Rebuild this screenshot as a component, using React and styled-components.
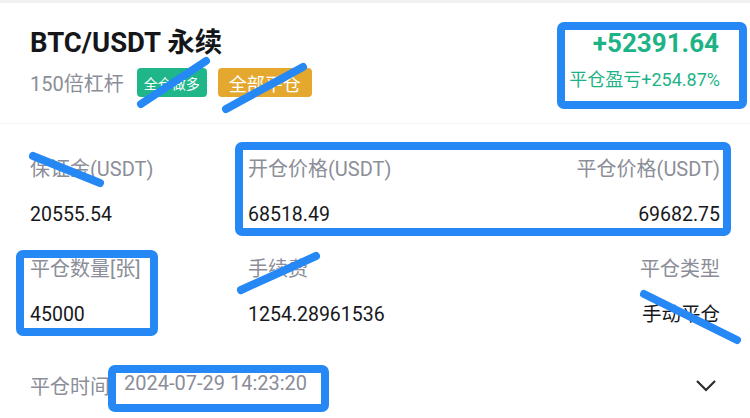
import React from 'react'
import styled, { createGlobalStyle } from 'styled-components'

const GlobalStyle = createGlobalStyle`
  html, body {
    margin: 0;
    padding: 0;
    background: #ffffff;
  }
  body {
    font-family: Roboto, "Noto Sans CJK SC", sans-serif;
  }
`

const Page = styled.div`
  position: relative;
  width: 750px;
  height: 418px;
  overflow: hidden;
  background: #fff;
  border-top: 3px solid #f1f1f3;
  box-sizing: border-box;
`

const Header = styled.div`
  display: flex;
  justify-content: space-between;
  padding: 24px 30px 0 30px;
  height: 96px;
  border-bottom: 1px solid #f3f3f5;
`

const TitleBlock = styled.div`
  display: flex;
  flex-direction: column;
  gap: 9px;
`

const Title = styled.div`
  font-size: 27.5px;
  font-weight: 700;
  color: #15161a;
  line-height: 32px;
`

const SubRow = styled.div`
  display: flex;
  align-items: center;
  gap: 11px;
`

const Leverage = styled.span`
  font-size: 20px;
  color: #8b8e98;
  margin-right: 2px;
`

const Badge = styled.span`
  display: inline-flex;
  align-items: center;
  justify-content: center;
  height: 29px;
  padding: 0 ${p => p.$pad}px;
  border-radius: 4px;
  background: ${p => p.$bg};
  color: #fff;
  font-size: ${p => p.$size}px;
  box-sizing: border-box;
`

const PnlBlock = styled.div`
  display: flex;
  flex-direction: column;
  align-items: flex-end;
  gap: 8px;
  color: #1db386;
`

const PnlValue = styled.div`
  font-size: 26px;
  font-weight: 700;
  line-height: 32px;
  padding-right: 1px;
`

const PnlRate = styled.div`
  font-size: 18px;
  line-height: 26px;
`

const Grid = styled.div`
  display: grid;
  grid-template-columns: 218px 1fr 1fr;
  row-gap: 28px;
  padding: 32px 30px 0 30px;
`

const Cell = styled.div`
  display: flex;
  flex-direction: column;
  gap: 20px;
  align-items: ${p => (p.$right ? 'flex-end' : 'flex-start')};
`

const Label = styled.div`
  font-size: 20px;
  line-height: 26px;
  color: #8b8e98;
`

const Value = styled.div`
  font-size: 19.5px;
  line-height: 26px;
  color: #17181c;
`

const TimeRow = styled.div`
  display: flex;
  align-items: center;
  justify-content: space-between;
  padding: 43px 30px 0 30px;
`

const TimeText = styled.div`
  font-size: 20px;
  color: #8b8e98;
  display: flex;
  gap: 14px;
`

const Chevron = styled.svg`
  width: 22px;
  height: 14px;
  margin-right: 3px;
`

const Marks = styled.svg`
  position: absolute;
  left: 0;
  top: 0;
  pointer-events: none;
`

const cells = [
  { label: '保证金(USDT)', value: '20555.54' },
  { label: '开仓价格(USDT)', value: '68518.49' },
  { label: '平仓价格(USDT)', value: '69682.75', right: true },
  { label: '平仓数量[张]', value: '45000' },
  { label: '手续费', value: '1254.28961536' },
  { label: '平仓类型', value: '手动平仓', right: true }
]

const boxes = [
  [561, 23, 182, 79],
  [239, 143, 488, 86],
  [20, 251, 134, 78],
  [112, 366, 213, 39]
]

const strokes = [
  [206, 58, 141, 101],
  [303, 64, 226, 106],
  [33, 153, 100, 180],
  [316, 253, 241, 287],
  [644, 291, 737, 337]
]

export default function App () {
  return (
    <Page>
      <GlobalStyle />
      <Header>
        <TitleBlock>
          <Title>BTC/USDT 永续</Title>
          <SubRow>
            <Leverage>150倍杠杆</Leverage>
            <Badge $bg="#1fb68a" $size={14} $pad={7}>全仓做多</Badge>
            <Badge $bg="#e5a82e" $size={18} $pad={11}>全部平仓</Badge>
          </SubRow>
        </TitleBlock>
        <PnlBlock>
          <PnlValue>+52391.64</PnlValue>
          <PnlRate>平仓盈亏+254.87%</PnlRate>
        </PnlBlock>
      </Header>
      <Grid>
        {cells.map(c => (
          <Cell key={c.label} $right={c.right}>
            <Label>{c.label}</Label>
            <Value>{c.value}</Value>
          </Cell>
        ))}
      </Grid>
      <TimeRow>
        <TimeText>
          <span>平仓时间</span>
          <span>2024-07-29 14:23:20</span>
        </TimeText>
        <Chevron viewBox="0 0 22 14">
          <path d="M2 2 L11 11 L20 2" fill="none" stroke="#2a2b30" strokeWidth="2.2" />
        </Chevron>
      </TimeRow>
      <Marks width="750" height="418" viewBox="0 0 750 418">
        {boxes.map(([x, y, w, h], i) => (
          <rect key={i} x={x} y={y} width={w} height={h} rx="3" fill="none" stroke="#2688f5" strokeWidth="8" />
        ))}
        {strokes.map(([x1, y1, x2, y2], i) => (
          <line key={i} x1={x1} y1={y1} x2={x2} y2={y2} stroke="#2688f5" strokeWidth="8" strokeLinecap="round" />
        ))}
      </Marks>
    </Page>
  )
}
